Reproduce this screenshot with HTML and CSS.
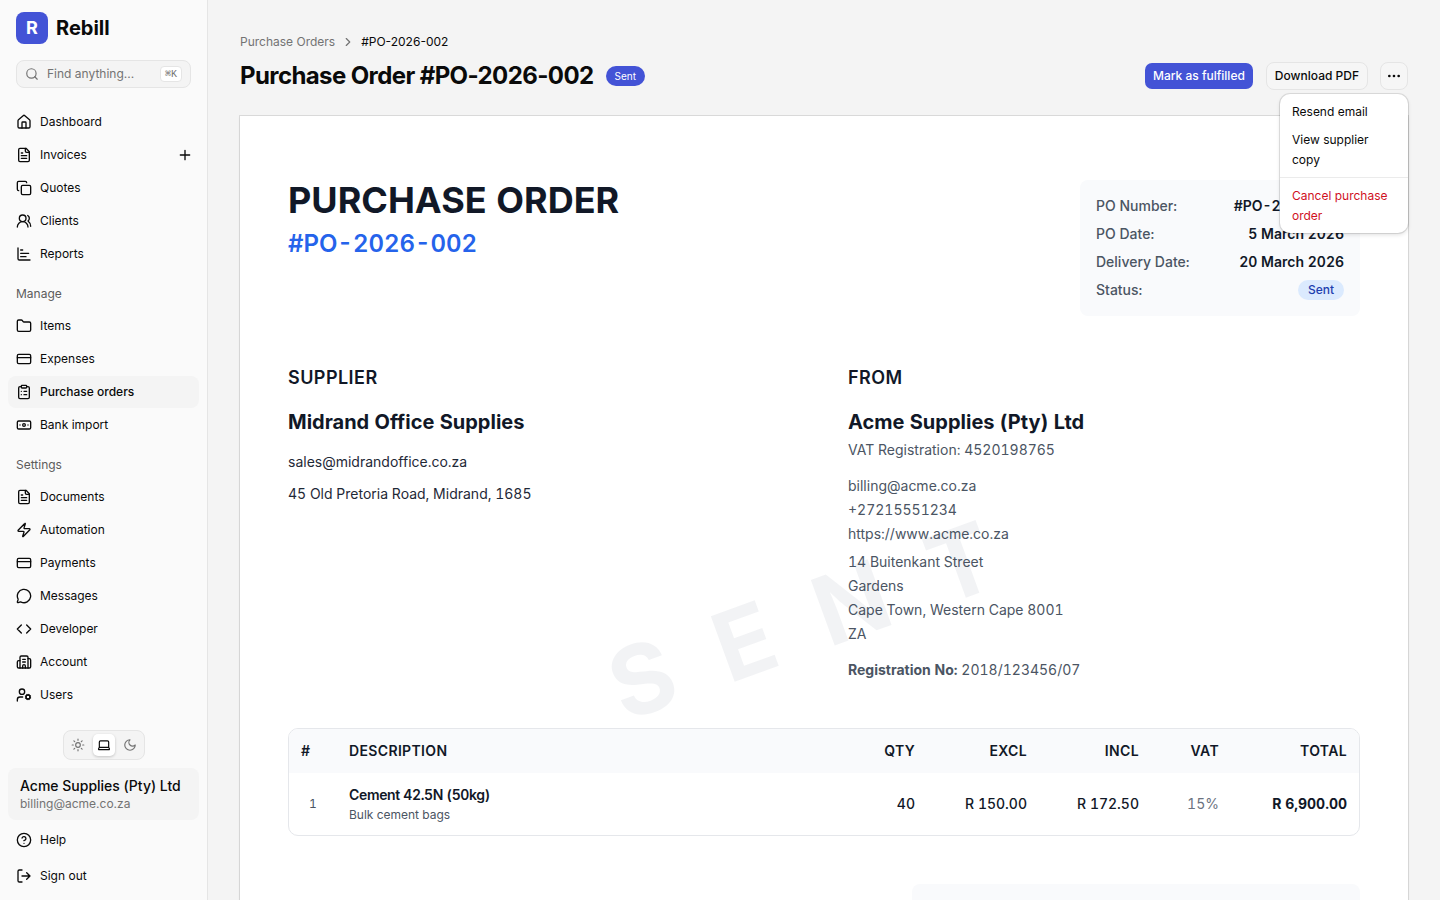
FILE: index.html
```html
<!DOCTYPE html>
<html lang="en">
<head>
    <meta charset="UTF-8" />
    <meta name="viewport" content="width=device-width, initial-scale=1.0"/>
    <title>Purchase Order #PO-2026-002 - Rebill</title>
    <link rel="stylesheet" href="styles.css">
</head>
<body>
    <aside class="sidebar">
        <div class="brand">
            <span class="brand-mark">R</span>
            <span class="brand-name">Rebill</span>
        </div>
        <div class="search">
            <svg class="icon icon-sm" viewBox="0 0 24 24"><circle cx="11" cy="11" r="8"/><path d="m21 21-4.3-4.3"/></svg>
            <span class="search-text">Find anything...</span>
            <kbd>⌘K</kbd>
        </div>

        <nav class="nav">
            <a class="nav-item"><svg class="icon" viewBox="0 0 24 24"><path d="M15 21v-8a1 1 0 0 0-1-1h-4a1 1 0 0 0-1 1v8"/><path d="M3 10a2 2 0 0 1 .709-1.528l7-5.999a2 2 0 0 1 2.582 0l7 5.999A2 2 0 0 1 21 10v9a2 2 0 0 1-2 2H5a2 2 0 0 1-2-2z"/></svg>Dashboard</a>
            <a class="nav-item"><svg class="icon" viewBox="0 0 24 24"><path d="M15 2H6a2 2 0 0 0-2 2v16a2 2 0 0 0 2 2h12a2 2 0 0 0 2-2V7Z"/><path d="M14 2v4a2 2 0 0 0 2 2h4M10 9H8M16 13H8M16 17H8"/></svg>Invoices<svg class="icon nav-add" viewBox="0 0 24 24"><path d="M5 12h14M12 5v14"/></svg></a>
            <a class="nav-item"><svg class="icon" viewBox="0 0 24 24"><rect x="8" y="8" width="14" height="14" rx="2"/><path d="M4 16c-1.1 0-2-.9-2-2V4c0-1.1.9-2 2-2h10c1.1 0 2 .9 2 2"/></svg>Quotes</a>
            <a class="nav-item"><svg class="icon" viewBox="0 0 24 24"><path d="M18 21a8 8 0 0 0-16 0"/><circle cx="10" cy="8" r="5"/><path d="M22 20c0-3.37-2-6.5-4-8a5 5 0 0 0-.45-8.3"/></svg>Clients</a>
            <a class="nav-item"><svg class="icon" viewBox="0 0 24 24"><path d="M3 3v16a2 2 0 0 0 2 2h16M7 16h8M7 11h12M7 6h3"/></svg>Reports</a>
        </nav>

        <div class="nav-label">Manage</div>
        <nav class="nav">
            <a class="nav-item"><svg class="icon" viewBox="0 0 24 24"><path d="M20 20a2 2 0 0 0 2-2V8a2 2 0 0 0-2-2h-7.9a2 2 0 0 1-1.69-.9L9.6 3.9A2 2 0 0 0 7.93 3H4a2 2 0 0 0-2 2v13a2 2 0 0 0 2 2Z"/></svg>Items</a>
            <a class="nav-item"><svg class="icon" viewBox="0 0 24 24"><rect x="2" y="5" width="20" height="14" rx="2"/><path d="M2 10h20"/></svg>Expenses</a>
            <a class="nav-item active"><svg class="icon" viewBox="0 0 24 24"><rect x="8" y="2" width="8" height="4" rx="1"/><path d="M16 4h2a2 2 0 0 1 2 2v14a2 2 0 0 1-2 2H6a2 2 0 0 1-2-2V6a2 2 0 0 1 2-2h2M12 11h4M12 16h4M8 11h.01M8 16h.01"/></svg>Purchase orders</a>
            <a class="nav-item"><svg class="icon" viewBox="0 0 24 24"><rect x="2" y="6" width="20" height="12" rx="2"/><circle cx="12" cy="12" r="2"/><path d="M6 12h.01M18 12h.01"/></svg>Bank import</a>
        </nav>

        <div class="nav-label">Settings</div>
        <nav class="nav">
            <a class="nav-item"><svg class="icon" viewBox="0 0 24 24"><path d="M15 2H6a2 2 0 0 0-2 2v16a2 2 0 0 0 2 2h12a2 2 0 0 0 2-2V7Z"/><path d="M14 2v4a2 2 0 0 0 2 2h4M10 9H8M16 13H8M16 17H8"/></svg>Documents</a>
            <a class="nav-item"><svg class="icon" viewBox="0 0 24 24"><path d="M4 14a1 1 0 0 1-.78-1.63l9.9-10.2a.5.5 0 0 1 .86.46l-1.92 6.02A1 1 0 0 0 13 10h7a1 1 0 0 1 .78 1.63l-9.9 10.2a.5.5 0 0 1-.86-.46l1.92-6.02A1 1 0 0 0 11 14z"/></svg>Automation</a>
            <a class="nav-item"><svg class="icon" viewBox="0 0 24 24"><rect x="2" y="5" width="20" height="14" rx="2"/><path d="M2 10h20"/></svg>Payments</a>
            <a class="nav-item"><svg class="icon" viewBox="0 0 24 24"><path d="M2.992 16.342a2 2 0 0 1 .094 1.167l-1.065 3.29a1 1 0 0 0 1.236 1.168l3.413-.998a2 2 0 0 1 1.099.092 10 10 0 1 0-4.777-4.719"/></svg>Messages</a>
            <a class="nav-item"><svg class="icon" viewBox="0 0 24 24"><path d="m16 18 6-6-6-6M8 6l-6 6 6 6"/></svg>Developer</a>
            <a class="nav-item"><svg class="icon" viewBox="0 0 24 24"><path d="M10 12h4M10 8h4M14 21v-3a2 2 0 0 0-4 0v3"/><path d="M6 10H4a2 2 0 0 0-2 2v7a2 2 0 0 0 2 2h16a2 2 0 0 0 2-2V9a2 2 0 0 0-2-2h-2"/><path d="M6 21V5a2 2 0 0 1 2-2h8a2 2 0 0 1 2 2v16"/></svg>Account</a>
            <a class="nav-item"><svg class="icon" viewBox="0 0 24 24"><path d="M10 15H6a4 4 0 0 0-4 4v2"/><circle cx="9" cy="7" r="4"/><circle cx="18" cy="15" r="3"/><path d="m21.7 16.4-.9-.3M15.2 13.9l-.9-.3M16.6 18.7l.3-.9M19.1 12.2l.3-.9M19.6 18.7l-.4-1M16.8 12.3l-.4-1M14.3 16.6l1-.4M20.7 13.8l1-.4"/></svg>Users</a>
        </nav>

        <div class="sidebar-footer">
            <div class="theme-toggle">
                <span class="theme-option"><svg class="icon icon-sm" viewBox="0 0 24 24"><circle cx="12" cy="12" r="4"/><path d="M12 2v2M12 20v2M4.93 4.93l1.41 1.41M17.66 17.66l1.41 1.41M2 12h2M20 12h2M6.34 17.66l-1.41 1.41M19.07 4.93l-1.41 1.41"/></svg></span>
                <span class="theme-option selected"><svg class="icon icon-sm" viewBox="0 0 24 24"><path d="M18 5a2 2 0 0 1 2 2v8.526a2 2 0 0 0 .212.897l1.068 2.127a1 1 0 0 1-.9 1.45H3.62a1 1 0 0 1-.9-1.45l1.068-2.127A2 2 0 0 0 4 15.526V7a2 2 0 0 1 2-2zM20.054 15.987H3.946"/></svg></span>
                <span class="theme-option"><svg class="icon icon-sm" viewBox="0 0 24 24"><path d="M12 3a6 6 0 0 0 9 9 9 9 0 1 1-9-9Z"/></svg></span>
            </div>
            <div class="company">
                <div class="company-name">Acme Supplies (Pty) Ltd</div>
                <div class="company-email">billing@acme.co.za</div>
            </div>
            <a class="nav-item"><svg class="icon" viewBox="0 0 24 24"><circle cx="12" cy="12" r="10"/><path d="M9.09 9a3 3 0 0 1 5.83 1c0 2-3 3-3 3M12 17h.01"/></svg>Help</a>
            <a class="nav-item"><svg class="icon" viewBox="0 0 24 24"><path d="m16 17 5-5-5-5M21 12H9M9 21H5a2 2 0 0 1-2-2V5a2 2 0 0 1 2-2h4"/></svg>Sign out</a>
        </div>
    </aside>

    <main class="main">
        <div class="breadcrumb">
            <span class="crumb">Purchase Orders</span>
            <svg class="icon icon-sm" viewBox="0 0 24 24"><path d="m9 18 6-6-6-6"/></svg>
            <span>#PO-2026-002</span>
        </div>
        <header class="page-header">
            <h1>Purchase Order #PO-2026-002</h1>
            <span class="badge">Sent</span>
            <div class="actions">
                <button class="btn btn-primary">Mark as fulfilled</button>
                <button class="btn">Download PDF</button>
                <div class="more">
                    <button class="btn btn-icon"><svg class="icon" viewBox="0 0 24 24"><circle cx="12" cy="12" r="1"/><circle cx="19" cy="12" r="1"/><circle cx="5" cy="12" r="1"/></svg></button>
                    <div class="menu">
                        <a class="menu-item">Resend email</a>
                        <a class="menu-item">View supplier copy</a>
                        <div class="menu-separator"></div>
                        <a class="menu-item danger">Cancel purchase order</a>
                    </div>
                </div>
            </div>
        </header>

        <article class="document">
            <div class="watermark"><span>SENT</span></div>

            <div class="doc-header">
                <div>
                    <h2 class="doc-title">PURCHASE ORDER</h2>
                    <div class="doc-number">#PO-2026-002</div>
                </div>
                <dl class="meta">
                    <div class="meta-row"><dt>PO Number:</dt><dd>#PO-2026-002</dd></div>
                    <div class="meta-row"><dt>PO Date:</dt><dd>5 March 2026</dd></div>
                    <div class="meta-row"><dt>Delivery Date:</dt><dd>20 March 2026</dd></div>
                    <div class="meta-row"><dt>Status:</dt><dd class="status">Sent</dd></div>
                </dl>
            </div>

            <div class="parties">
                <section>
                    <h3>SUPPLIER</h3>
                    <div class="party-name">Midrand Office Supplies</div>
                    <div class="supplier-details">
                        <p>sales@midrandoffice.co.za</p>
                        <p>45 Old Pretoria Road, Midrand, 1685</p>
                    </div>
                </section>
                <section>
                    <h3>FROM</h3>
                    <div class="party-name">Acme Supplies (Pty) Ltd</div>
                    <div class="from-details">
                        <p class="vat-no">VAT Registration: 4520198765</p>
                        <div class="contact">
                            <p>billing@acme.co.za</p>
                            <p>+27215551234</p>
                            <p>https://www.acme.co.za</p>
                        </div>
                        <div class="address">
                            <p>14 Buitenkant Street</p>
                            <p>Gardens</p>
                            <p>Cape Town, Western Cape 8001</p>
                            <p>ZA</p>
                        </div>
                        <p class="reg-no"><strong>Registration No:</strong> 2018/123456/07</p>
                    </div>
                </section>
            </div>

            <div class="items">
                <table>
                    <colgroup>
                        <col class="col-index"><col><col class="col-qty"><col class="col-price"><col class="col-price"><col class="col-vat"><col class="col-total">
                    </colgroup>
                    <thead>
                        <tr>
                            <th>#</th>
                            <th>DESCRIPTION</th>
                            <th class="num">QTY</th>
                            <th class="num">EXCL</th>
                            <th class="num">INCL</th>
                            <th class="num">VAT</th>
                            <th class="num">TOTAL</th>
                        </tr>
                    </thead>
                    <tbody>
                        <tr>
                            <td class="index">1</td>
                            <td>
                                <div class="item-name">Cement 42.5N (50kg)</div>
                                <div class="item-note">Bulk cement bags</div>
                            </td>
                            <td class="num">40</td>
                            <td class="num">R 150.00</td>
                            <td class="num">R 172.50</td>
                            <td class="num vat">15%</td>
                            <td class="num total">R 6,900.00</td>
                        </tr>
                    </tbody>
                </table>
            </div>

            <div class="totals"></div>
        </article>
    </main>
</body>
</html>
```
FILE: styles.css
```css
* {
    margin: 0;
    padding: 0;
    box-sizing: border-box;
}

:root {
    --primary: #4353d6;
    --text: #0a0a0a;
    --muted: #737373;
    --border: #e5e5e5;
    --doc-text: #111827;
    --doc-muted: #4b5563;
    --doc-panel: #f9fafc;
}

body {
    font-family: Inter, sans-serif;
    font-size: 12px;
    line-height: 20px;
    color: var(--text);
    background: #f4f4f4;
    display: flex;
    height: 100vh;
    overflow: hidden;
}

.icon {
    width: 16px;
    height: 16px;
    flex-shrink: 0;
    fill: none;
    stroke: currentColor;
    stroke-width: 2;
    stroke-linecap: round;
    stroke-linejoin: round;
}

.icon-sm {
    width: 14px;
    height: 14px;
}

/* Sidebar */
.sidebar {
    width: 208px;
    flex-shrink: 0;
    display: flex;
    flex-direction: column;
    background: #fafafa;
    border-right: 1px solid var(--border);
    padding: 12px 8px 8px;
}

.brand {
    display: flex;
    align-items: center;
    gap: 8px;
    padding: 0 8px;
}

.brand-mark {
    width: 32px;
    height: 32px;
    border-radius: 8px;
    background: var(--primary);
    color: #fff;
    font-size: 18px;
    font-weight: 700;
    line-height: 32px;
    text-align: center;
}

.brand-name {
    font-size: 20px;
    font-weight: 700;
    line-height: 28px;
}

.search {
    display: flex;
    align-items: center;
    gap: 8px;
    height: 28px;
    margin: 16px 8px 18px;
    padding: 0 8px;
    border: 1px solid var(--border);
    border-radius: 8px;
    background: #f4f4f4;
    color: var(--muted);
}

.search-text {
    flex: 1;
}

kbd {
    padding: 1px 4px 0;
    border: 1px solid var(--border);
    border-radius: 4px;
    background: #fff;
    font-family: "Liberation Mono", monospace;
    font-size: 10px;
    line-height: 13px;
}

.nav {
    display: flex;
    flex-direction: column;
    gap: 1px;
}

.nav-item {
    display: flex;
    align-items: center;
    gap: 8px;
    height: 32px;
    padding: 0 8px;
    border-radius: 8px;
}

.nav-item.active {
    background: #f4f4f4;
    font-weight: 500;
}

.nav-add {
    margin-left: auto;
    margin-right: -2px;
}

.nav-label {
    height: 32px;
    margin-top: 8px;
    padding: 0 8px;
    line-height: 32px;
    color: #5c5c5c;
}

.sidebar-footer {
    display: flex;
    flex-direction: column;
    gap: 4px;
    margin-top: auto;
}

.theme-toggle {
    display: flex;
    align-self: center;
    gap: 4px;
    padding: 3px;
    margin-bottom: 4px;
    border: 1px solid var(--border);
    border-radius: 8px;
    background: #f4f4f4;
    color: var(--muted);
}

.theme-option {
    display: flex;
    align-items: center;
    justify-content: center;
    width: 22px;
    height: 22px;
    border-radius: 5px;
}

.theme-option.selected {
    background: #fff;
    color: var(--text);
    box-shadow: 0 1px 3px rgba(0, 0, 0, 0.2);
}

.company {
    height: 52px;
    padding: 8px 12px;
    border-radius: 8px;
    background: #f4f4f4;
}

.company-name {
    font-size: 14px;
    font-weight: 500;
}

.company-email {
    line-height: 16px;
    color: var(--muted);
}

/* Page */
.main {
    flex: 1;
    min-width: 0;
    padding: 32px;
}

.breadcrumb {
    display: flex;
    align-items: center;
    gap: 6px;
}

.crumb,
.breadcrumb .icon {
    color: var(--muted);
}

.page-header {
    display: flex;
    align-items: center;
    height: 32px;
    margin: 8px 0 24px;
}

h1 {
    font-size: 24px;
    font-weight: 700;
    line-height: 32px;
    letter-spacing: -0.025em;
}

.badge {
    margin-left: 12px;
    padding: 0 9px;
    border-radius: 10px;
    background: var(--primary);
    color: #fff;
    font-size: 10px;
}

.actions {
    display: flex;
    gap: 12px;
    margin-left: auto;
}

.btn {
    height: 28px;
    padding: 0 8px 1px;
    border: 1px solid var(--border);
    border-radius: 8px;
    background: #f6f6f6;
    color: var(--text);
    font-family: inherit;
    font-size: 12px;
    font-weight: 500;
}

.btn-primary {
    border-color: transparent;
    background: var(--primary);
    background-clip: padding-box;
    color: #fff;
}

.btn-icon {
    display: flex;
    align-items: center;
    justify-content: center;
    width: 28px;
    padding: 0;
}

.more {
    position: relative;
}

.menu {
    position: absolute;
    top: 32px;
    right: 0;
    z-index: 10;
    width: 128px;
    padding: 4px 0 3px;
    border-radius: 10px;
    background: #fff;
    box-shadow: 0 0 0 1px rgba(0, 0, 0, 0.1), 0 2px 4px rgba(0, 0, 0, 0.12);
}

.menu-item {
    display: block;
    padding: 4px 12px;
}

.menu-separator {
    height: 1px;
    margin: 3px 0 4px;
    background: #ebebeb;
}

.menu-item.danger {
    color: #d0111f;
}

/* Document */
.document {
    position: relative;
    height: 992px;
    padding: 64px 48px;
    background: #fff;
    box-shadow: 0 0 0 1px rgba(0, 0, 0, 0.1), 0 1px 3px rgba(0, 0, 0, 0.06);
    color: var(--doc-text);
    font-size: 14px;
    font-variant-numeric: tabular-nums;
}

.watermark {
    position: absolute;
    inset: 0;
    display: flex;
    align-items: center;
    justify-content: center;
    overflow: hidden;
    pointer-events: none;
}

.watermark span {
    font-size: 96px;
    font-weight: 700;
    line-height: 1;
    letter-spacing: 0.5em;
    color: rgba(30, 50, 90, 0.06);
    transform: rotate(-20deg);
}

.doc-header {
    display: flex;
    justify-content: space-between;
    margin-bottom: 48px;
}

.doc-title {
    font-size: 36px;
    font-weight: 700;
    line-height: 40px;
}

.doc-number {
    margin-top: 8px;
    font-size: 24px;
    font-weight: 600;
    line-height: 32px;
    color: #2563eb;
}

.meta {
    display: flex;
    flex-direction: column;
    gap: 8px;
    width: 280px;
    padding: 16px;
    border-radius: 8px;
    background: var(--doc-panel);
}

.meta-row {
    display: flex;
    justify-content: space-between;
}

.meta-row dt {
    font-weight: 500;
    color: var(--doc-muted);
}

.meta-row dd {
    font-weight: 600;
}

.meta-row .status {
    padding: 0 10px;
    border-radius: 10px;
    background: #dbeafe;
    color: #1e40af;
    font-size: 12px;
    font-weight: 500;
}

.parties {
    display: grid;
    grid-template-columns: 1fr 1fr;
    gap: 48px;
    margin-bottom: 48px;
}

.parties h3 {
    margin-bottom: 16px;
    font-size: 18px;
    font-weight: 600;
    line-height: 28px;
    letter-spacing: 0.025em;
}

.party-name {
    font-size: 20px;
    font-weight: 700;
    line-height: 28px;
}

.supplier-details {
    display: flex;
    flex-direction: column;
    gap: 12px;
    margin-top: 16px;
    color: #1f2937;
}

.from-details {
    color: var(--doc-muted);
}

.vat-no {
    margin: 4px 0 14px;
}

.contact,
.address {
    line-height: 24px;
}

.address {
    margin: 4px 0 14px;
}

.items {
    border: 1px solid #e5e7eb;
    border-radius: 10px;
    overflow: hidden;
}

table {
    width: 100%;
    table-layout: fixed;
    border-collapse: collapse;
}

.col-index {
    width: 48px;
}

.col-qty,
.col-vat {
    width: 80px;
}

.col-price {
    width: 112px;
}

.col-total {
    width: 128px;
}

th,
td {
    padding: 12px;
    text-align: left;
}

th {
    background: var(--doc-panel);
    font-weight: 600;
    letter-spacing: 0.025em;
}

.num {
    text-align: right;
}

td.num {
    font-weight: 500;
}

td.index {
    text-align: center;
    font-size: 12px;
    color: var(--doc-muted);
}

.item-name {
    font-weight: 600;
    letter-spacing: -0.025em;
}

.item-note {
    margin-top: 2px;
    font-size: 12px;
    line-height: 16px;
    color: var(--doc-muted);
}

td.vat {
    font-weight: 400;
    color: #6b7280;
}

td.total {
    font-weight: 700;
}

.totals {
    width: 448px;
    height: 160px;
    margin: 48px 0 0 auto;
    border-radius: 8px;
    background: var(--doc-panel);
}
```
